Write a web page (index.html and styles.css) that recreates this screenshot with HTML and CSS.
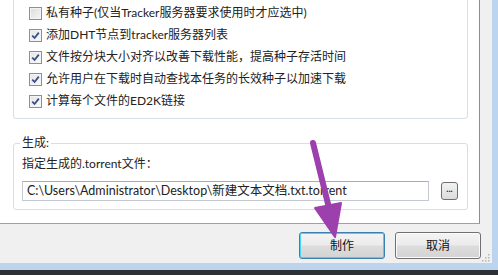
FILE: index.html
```html
<!DOCTYPE html>
<html lang="zh-CN">
<head>
<meta charset="utf-8">
<link rel="stylesheet" href="styles.css">
</head>
<body>
<div class="screen">
  <div class="window">
    <div class="panel">
      <div class="group options">
        <label class="row"><span class="box"></span><span>私有种子(仅当Tracker服务器要求使用时才应选中)</span></label>
        <label class="row"><span class="box checked"><svg viewBox="0 0 9 9"><path d="M1.2 4.6 L3.6 7 L7.8 1.6" /></svg></span><span>添加DHT节点到tracker服务器列表</span></label>
        <label class="row"><span class="box checked"><svg viewBox="0 0 9 9"><path d="M1.2 4.6 L3.6 7 L7.8 1.6" /></svg></span><span>文件按分块大小对齐以改善下载性能，提高种子存活时间</span></label>
        <label class="row"><span class="box checked"><svg viewBox="0 0 9 9"><path d="M1.2 4.6 L3.6 7 L7.8 1.6" /></svg></span><span>允许用户在下载时自动查找本任务的长效种子以加速下载</span></label>
        <label class="row"><span class="box checked"><svg viewBox="0 0 9 9"><path d="M1.2 4.6 L3.6 7 L7.8 1.6" /></svg></span><span>计算每个文件的ED2K链接</span></label>
      </div>
      <fieldset class="group output">
        <legend>生成:</legend>
        <div class="label">指定生成的.torrent文件：</div>
        <div class="pathrow">
          <div class="input">C:\Users\Administrator\Desktop\新建文本文档.txt.torrent</div>
          <div class="browse">...</div>
        </div>
      </fieldset>
    </div>
    <div class="actions">
      <div class="btn primary">制作</div>
      <div class="btn">取消</div>
      <svg class="grip" viewBox="0 0 8 8"><rect x="6" y="0" width="1.5" height="1.5"/><rect x="3" y="3" width="1.5" height="1.5"/><rect x="6" y="3" width="1.5" height="1.5"/><rect x="0" y="6" width="1.5" height="1.5"/><rect x="3" y="6" width="1.5" height="1.5"/><rect x="6" y="6" width="1.5" height="1.5"/></svg>
    </div>
  </div>
  <div class="taskbar"></div>
  <svg class="arrow" viewBox="0 0 498 275" width="498" height="275">
    <line x1="313" y1="143" x2="331" y2="216" />
    <polygon points="335,237 315,208 341,203" />
  </svg>
</div>
</body>
</html>
```

FILE: styles.css
```css
html, body {
  margin: 0;
  padding: 0;
}
body {
  width: 498px;
  height: 275px;
  overflow: hidden;
  font-family: "Lato", "Noto Sans CJK SC", "Noto Sans", sans-serif;
  font-size: 12px;
  color: #222;
}
.screen {
  position: relative;
  width: 498px;
  height: 275px;
  background: #bdd4ee;
  overflow: hidden;
}
.window {
  width: 492px;
  height: 263px;
  background: #f0f0f0;
  display: flex;
  flex-direction: column;
}
.panel {
  width: 479px;
  height: 223px;
  background: #fff;
  border-right: 1px solid #8a8d93;
  border-bottom: 1px solid #a0a0a0;
  display: flex;
  flex-direction: column;
  overflow: hidden;
}
.group {
  margin: 0 0 0 13px;
  width: 455px;
  box-sizing: border-box;
  border: 1px solid #d5dfe5;
  border-radius: 3px;
}
.options {
  margin-top: -10px;
  padding: 11px 0 6px 15px;
  display: flex;
  flex-direction: column;
}
.row {
  height: 22px;
  display: flex;
  align-items: center;
  gap: 4px;
  line-height: 16px;
  white-space: nowrap;
}
.box {
  width: 11px;
  height: 11px;
  border: 1px solid #8e8f8f;
  background: linear-gradient(135deg, #dcdcdc, #f6f6f6);
  box-shadow: inset 0 0 0 1px #f4f4f4;
  display: flex;
  align-items: center;
  justify-content: center;
  flex: none;
}
.box.checked {
  background: linear-gradient(135deg, #e4e4e4, #fbfbfb);
}
.box svg {
  width: 9px;
  height: 9px;
}
.box svg path {
  fill: none;
  stroke: #3b4f86;
  stroke-width: 1.8;
}
.output {
  margin-top: 16px;
  padding: 5px 0 8px 8px;
  min-inline-size: 0;
}
.output legend {
  padding: 0 2px;
  margin-left: -2px;
  line-height: 16px;
}
.label {
  line-height: 16px;
  white-space: nowrap;
}
.pathrow {
  margin-top: 9px;
  display: flex;
  align-items: center;
  gap: 12px;
}
.input {
  width: 407px;
  height: 20px;
  box-sizing: border-box;
  border: 1px solid #c5cad2;
  border-top-color: #abadb3;
  padding: 0 4px;
  font-size: 12.5px;
  line-height: 18px;
  white-space: nowrap;
  overflow: hidden;
}
.browse {
  width: 17px;
  height: 18px;
  box-sizing: border-box;
  border: 1px solid #707070;
  border-radius: 3px;
  background: linear-gradient(#f2f2f2, #dcdcdc);
  font-size: 9px;
  line-height: 12px;
  text-align: center;
  font-weight: bold;
}
.actions {
  flex: 1;
  display: flex;
  justify-content: flex-end;
  align-items: flex-start;
  gap: 10px;
  padding: 8px 11px 0 0;
  position: relative;
}
.btn {
  width: 86px;
  height: 27px;
  box-sizing: border-box;
  border: 1px solid #707070;
  border-radius: 3px;
  background: linear-gradient(#f4f4f4 0%, #ebebeb 48%, #dddddd 52%, #d3d3d3 100%);
  box-shadow: inset 0 0 0 1px #fbfbfb;
  text-align: center;
  line-height: 25px;
  color: #111;
}
.btn.primary {
  border-color: #3c7fb1;
  box-shadow: inset 0 0 0 1px #48d4f8;
}
.grip {
  position: absolute;
  right: 2px;
  bottom: 1px;
  width: 8px;
  height: 8px;
  fill: #b5b5b5;
}
.taskbar {
  margin-top: 7px;
  height: 5px;
  background: #2d3136;
}
.arrow {
  position: absolute;
  left: 0;
  top: 0;
  pointer-events: none;
}
.arrow line {
  stroke: #9c40ad;
  stroke-width: 6;
  stroke-linecap: round;
}
.arrow polygon {
  fill: #9c40ad;
  stroke: #9c40ad;
  stroke-width: 2;
  stroke-linejoin: round;
}
```
